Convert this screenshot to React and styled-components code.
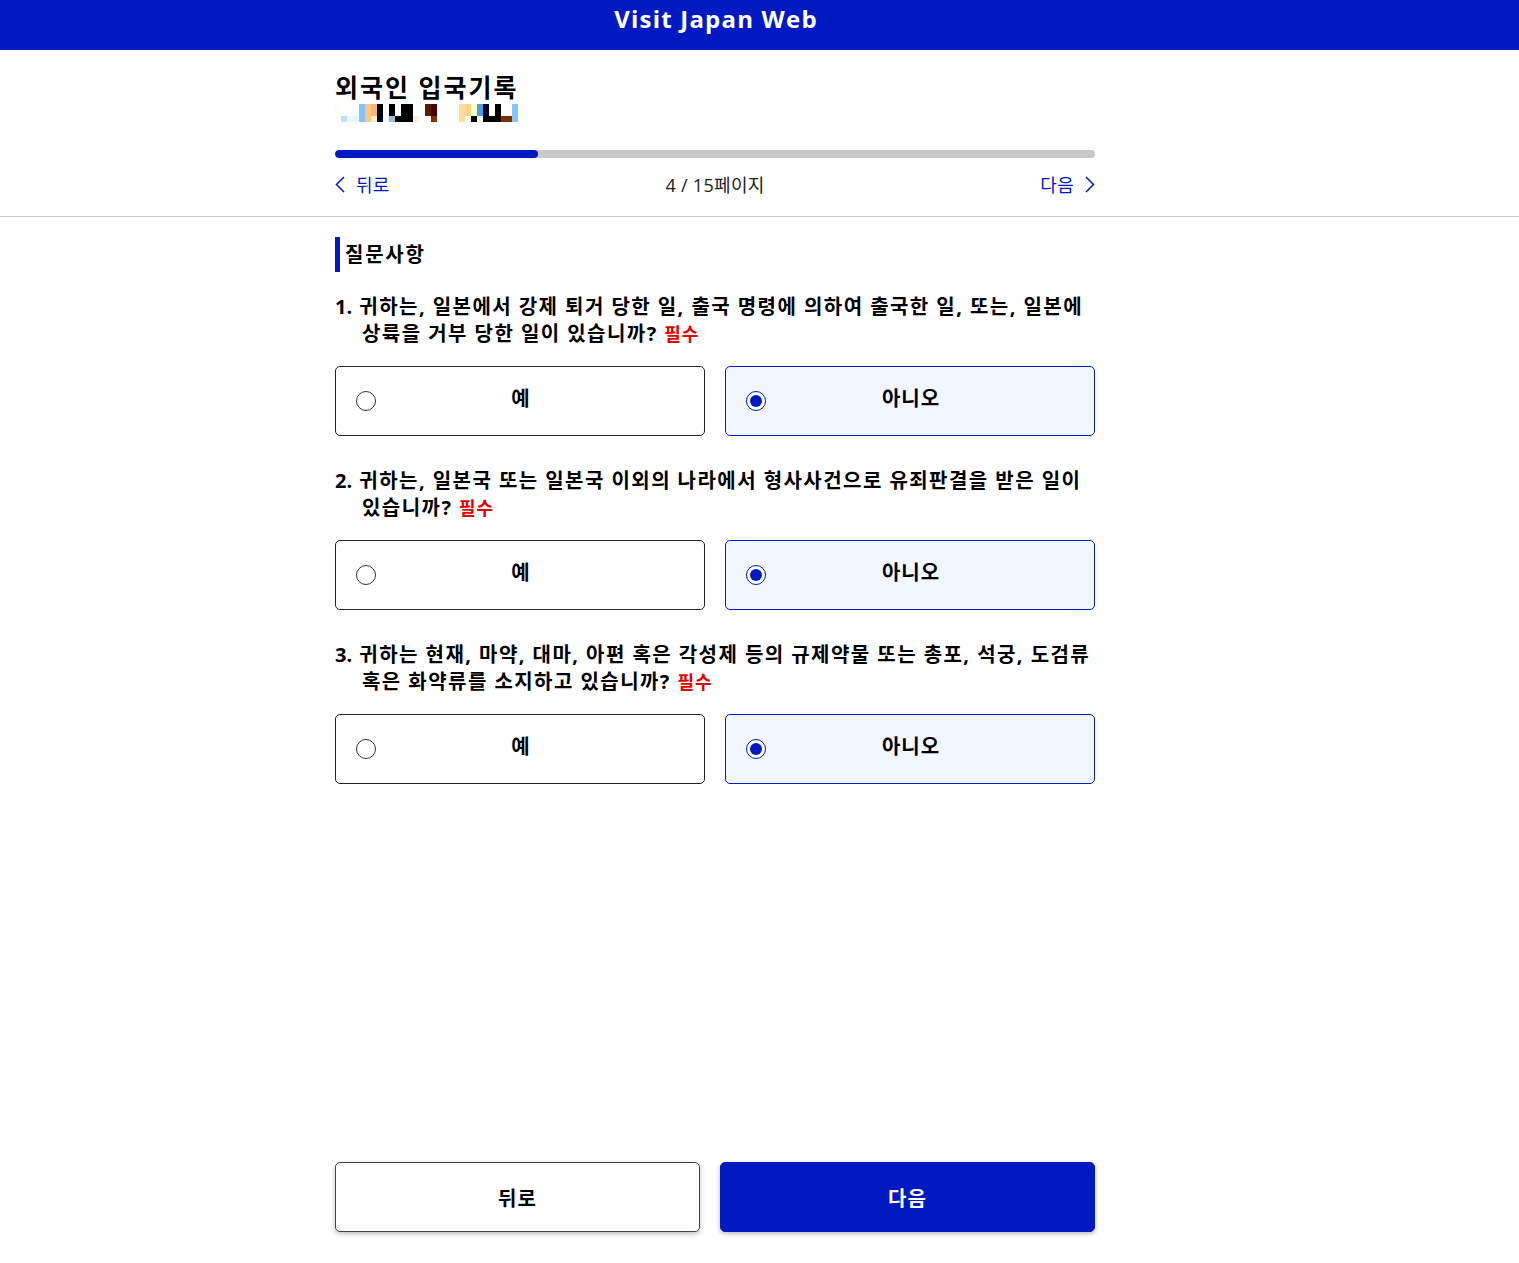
import React from "react";
import styled, { createGlobalStyle } from "styled-components";

const BLUE = "#0019c1";

const GlobalStyle = createGlobalStyle`
  html, body {
    margin: 0;
    padding: 0;
    background: #fff;
    font-family: "Open Sans", "Noto Sans CJK KR", sans-serif;
    color: #000;
  }
  * {
    box-sizing: border-box;
  }
`;

const Page = styled.div`
  min-height: 1263px;
  display: flex;
  flex-direction: column;
`;

const Header = styled.header`
  height: 50px;
  background: ${BLUE};
  padding-left: 336px;
`;

const HeaderTitle = styled.div`
  width: 760px;
  text-align: center;
  color: #fff;
  font-size: 24px;
  font-weight: 700;
  line-height: 37px;
  letter-spacing: 1.2px;
`;

const Top = styled.div`
  height: 167px;
  padding: 21px 0 0 335px;
  border-bottom: 1px solid #ccc;
`;

const Title = styled.h1`
  margin: 0;
  font-size: 25px;
  font-weight: 700;
  line-height: 33px;
  letter-spacing: 2px;
`;

const Mosaic = styled.svg`
  display: block;
  width: 184px;
  height: 18px;
`;

const ProgressTrack = styled.div`
  width: 760px;
  height: 8px;
  margin-top: 28px;
  border-radius: 4px;
  background: #c8c8c8;
  overflow: hidden;
`;

const ProgressFill = styled.div`
  height: 100%;
  border-radius: 4px;
  background: ${BLUE};
`;

const Pager = styled.div`
  width: 760px;
  margin-top: 14px;
  display: grid;
  grid-template-columns: 1fr auto 1fr;
  align-items: center;
  font-size: 18px;
  line-height: 26px;
  letter-spacing: 0.3px;
`;

const PagerLink = styled.a`
  display: flex;
  align-items: center;
  gap: 11px;
  color: ${BLUE};
  justify-content: ${(props) => (props.$end ? "flex-end" : "flex-start")};
`;

const Chevron = styled.svg`
  width: 10px;
  height: 18px;
  fill: none;
  stroke: ${BLUE};
  stroke-width: 1.5;
`;

const PageCount = styled.span`
  color: #222;
`;

const Main = styled.main`
  width: 760px;
  margin-left: 335px;
  padding-top: 20px;
`;

const SectionTitle = styled.h2`
  margin: 0 0 21px;
  height: 35px;
  padding-left: 5px;
  border-left: 5px solid ${BLUE};
  font-size: 20px;
  font-weight: 700;
  line-height: 36px;
  letter-spacing: 1.75px;
`;

const Question = styled.section`
  margin-bottom: 31px;
`;

const QuestionText = styled.p`
  margin: 0 0 18px;
  padding-left: 27px;
  text-indent: -27px;
  font-size: 20px;
  font-weight: 700;
  line-height: 27px;
  letter-spacing: 1.45px;
  word-break: keep-all;
`;

const QuestionNumber = styled.span`
  letter-spacing: 0;
  word-spacing: 2px;
`;

const Required = styled.span`
  color: #e60000;
  font-size: 18px;
  font-weight: 700;
  letter-spacing: 1px;
`;

const Options = styled.div`
  display: grid;
  grid-template-columns: 1fr 1fr;
  gap: 20px;
`;

const Option = styled.label`
  height: 70px;
  padding-left: 20px;
  display: grid;
  grid-template-columns: 1fr auto 1fr;
  align-items: center;
  border: 1px solid ${(props) => (props.$checked ? BLUE : "#222")};
  border-radius: 5px;
  background: ${(props) => (props.$checked ? "#f2f6ff" : "#fff")};
`;

const Radio = styled.span`
  width: 20px;
  height: 20px;
  display: flex;
  align-items: center;
  justify-content: center;
  border: 1px solid ${(props) => (props.$checked ? BLUE : "#333")};
  border-radius: 50%;
  background: #fff;

  &::after {
    content: "";
    display: ${(props) => (props.$checked ? "block" : "none")};
    width: 12px;
    height: 12px;
    border-radius: 50%;
    background: ${BLUE};
  }
`;

const OptionLabel = styled.span`
  grid-column: 2;
  margin-left: -18px;
  padding-bottom: 6px;
  font-size: 20px;
  font-weight: 700;
  line-height: 27px;
  letter-spacing: 1px;
`;

const Footer = styled.footer`
  width: 760px;
  margin: auto 0 31px 335px;
  display: grid;
  grid-template-columns: 365px 375px;
  gap: 20px;
`;

const Button = styled.button`
  height: 70px;
  border: 1px solid ${(props) => (props.$primary ? BLUE : "#444")};
  border-radius: 5px;
  background: ${(props) => (props.$primary ? BLUE : "#fff")};
  color: ${(props) => (props.$primary ? "#fff" : "#000")};
  box-shadow: 0 2px 5px rgba(0, 0, 0, 0.26);
  font-family: inherit;
  font-size: 20px;
  font-weight: 700;
  letter-spacing: 1px;
`;

// censored name blocks: [column, row, colour, rows], each 6px wide
const mosaicBlocks = [
  [0, 0, "#fffef5", 2], [1, 2, "#c5dfee", 1], [2, 2, "#e0fbff", 1], [3, 2, "#e0fbff", 1],
  [4, 0, "#85c5fb", 3], [5, 0, "#fdc583", 3], [6, 0, "#f3b878", 2], [6, 2, "#ffeec0", 1],
  [7, 0, "#000", 2], [7, 2, "#000033", 1], [9, 0, "#000", 2], [9, 2, "#9fbcd0", 1],
  [10, 2, "#000", 1], [11, 0, "#000", 3], [12, 0, "#000", 3], [13, 2, "#ffeed8", 1],
  [15, 0, "#5c1a00", 2], [16, 0, "#4a0000", 2], [16, 2, "#803300", 1],
  [20.67, 0, "#ffdc9f", 3], [21.67, 0, "#ffd08c", 2], [22.67, 0, "#ffffc8", 2], [22.67, 2, "#000", 1],
  [23.67, 0, "#4a9edd", 2], [24.67, 0, "#000033", 2], [24.67, 2, "#000", 1], [25.67, 2, "#000", 1],
  [26.67, 0, "#000", 3], [27.67, 2, "#7a3300", 1], [28.67, 2, "#7a3300", 1], [29.5, 0, "#85c5fb", 3],
];

const questions = [
  { id: 1, text: "귀하는, 일본에서 강제 퇴거 당한 일, 출국 명령에 의하여 출국한 일, 또는, 일본에 상륙을 거부 당한 일이 있습니까?" },
  { id: 2, text: "귀하는, 일본국 또는 일본국 이외의 나라에서 형사사건으로 유죄판결을 받은 일이 있습니까?" },
  { id: 3, text: "귀하는 현재, 마약, 대마, 아편 혹은 각성제 등의 규제약물 또는 총포, 석궁, 도검류 혹은 화약류를 소지하고 있습니까?" },
];

const App = () => {
  const page = 4;
  const total = 15;

  return (
    <Page>
      <GlobalStyle />
      <Header>
        <HeaderTitle>Visit Japan Web</HeaderTitle>
      </Header>
      <Top>
        <Title>외국인 입국기록</Title>
        <Mosaic viewBox="0 0 184 18" shapeRendering="crispEdges">
          {mosaicBlocks.map(([col, row, color, rows], i) => (
            <rect key={i} x={col * 6} y={row * 6} width="6" height={rows * 6} fill={color} />
          ))}
        </Mosaic>
        <ProgressTrack>
          <ProgressFill style={{ width: `${(page / total) * 100}%` }} />
        </ProgressTrack>
        <Pager>
          <PagerLink>
            <Chevron viewBox="0 0 10 18">
              <path d="M9 1 1.5 8.5 9 16" />
            </Chevron>
            뒤로
          </PagerLink>
          <PageCount>{page} / {total}페이지</PageCount>
          <PagerLink $end>
            다음
            <Chevron viewBox="0 0 10 18">
              <path d="M1 1 8.5 8.5 1 16" />
            </Chevron>
          </PagerLink>
        </Pager>
      </Top>
      <Main>
        <SectionTitle>질문사항</SectionTitle>
        {questions.map((q) => (
          <Question key={q.id}>
            <QuestionText>
              <QuestionNumber>{q.id}. </QuestionNumber>
              {q.text} <Required>필수</Required>
            </QuestionText>
            <Options>
              <Option>
                <Radio />
                <OptionLabel>예</OptionLabel>
              </Option>
              <Option $checked>
                <Radio $checked />
                <OptionLabel>아니오</OptionLabel>
              </Option>
            </Options>
          </Question>
        ))}
      </Main>
      <Footer>
        <Button>뒤로</Button>
        <Button $primary>다음</Button>
      </Footer>
    </Page>
  );
};

export default App;
